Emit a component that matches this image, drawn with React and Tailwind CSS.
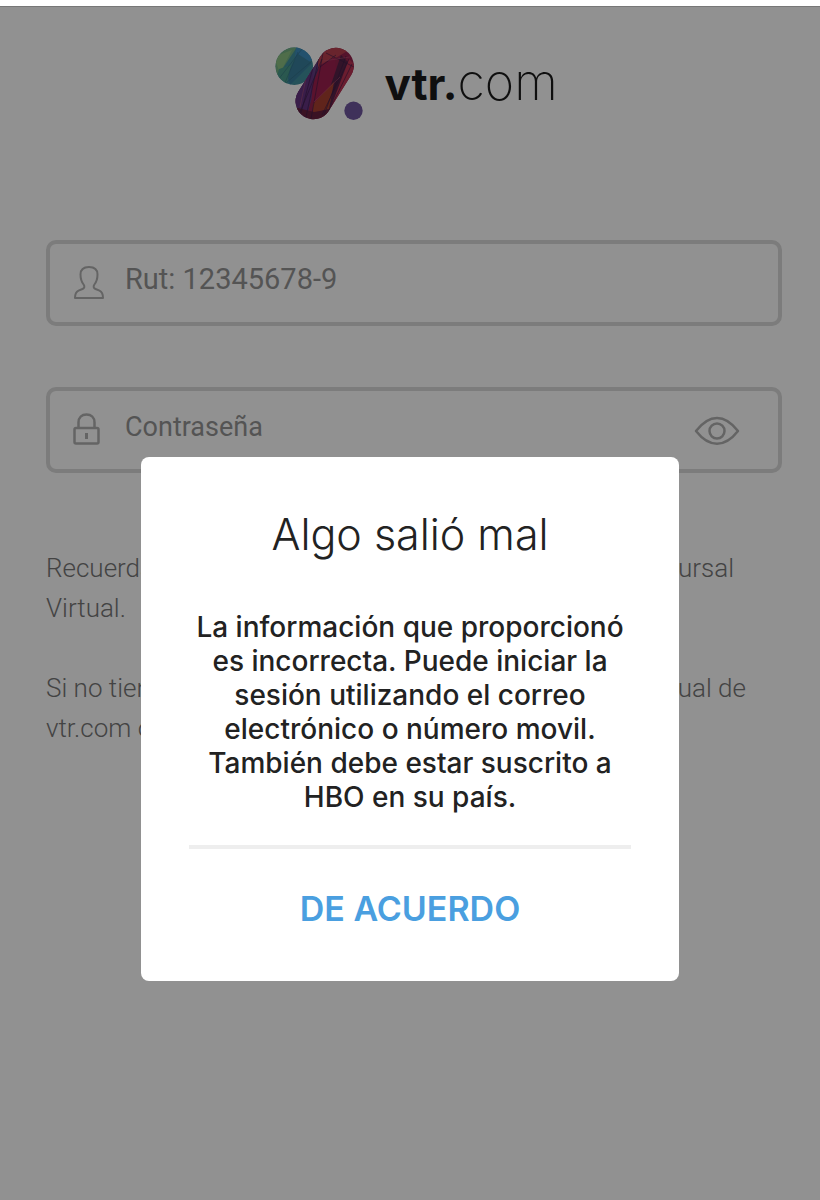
import React, { useState } from 'react';

const UserIcon = () => (
    <svg width="32" height="36" viewBox="0 0 32 36" fill="none" stroke="currentColor" strokeWidth="2" strokeLinejoin="round" aria-hidden="true">
        <path d="M16 2 C10.5 2 7.5 5 7.5 9.5 C7.5 14 8.6 17 10.6 19.5 C12 21.6 11.4 23.2 9.5 24 L5.5 25.6 C3 26.8 2 29.3 2 33 H30 C30 29.3 29 26.8 26.5 25.6 L22.5 24 C20.6 23.2 20 21.6 21.4 19.5 C23.4 17 24.5 14 24.5 9.5 C24.5 5 21.5 2 16 2 Z" />
    </svg>
);

const LockIcon = () => (
    <svg width="28" height="34" viewBox="0 0 28 34" fill="none" stroke="currentColor" strokeWidth="2.5" aria-hidden="true">
        <rect x="1.5" y="15" width="24" height="15.5" rx="1.5" />
        <path d="M5.5 15 V9.5 C5.5 4.5 8.8 1.5 13.5 1.5 C18.2 1.5 21.5 4.5 21.5 9.5 V15" />
        <path d="M13.5 20 V26" strokeWidth="3" />
    </svg>
);

const EyeIcon = () => (
    <svg width="46" height="30" viewBox="0 0 46 30" fill="none" stroke="currentColor" strokeWidth="2.5" strokeLinejoin="round" aria-hidden="true">
        <path d="M2 16 C9 7 15 3 23 3 C31 3 37 7 44 16 C37 25 31 28.7 23 28.7 C15 28.7 9 25 2 16 Z" />
        <circle cx="23" cy="16" r="7.5" />
    </svg>
);

const LogoMark = () => (
    <svg width="90" height="76" viewBox="0 0 90 76" aria-hidden="true">
        <defs>
            <clipPath id="ball">
                <circle cx="20.3" cy="19.3" r="18.7" />
            </clipPath>
            <clipPath id="pill">
                <rect x="-18" y="-39" width="36" height="78" rx="18" transform="translate(50.7 36.5) rotate(32)" />
            </clipPath>
        </defs>
        <g clipPath="url(#ball)">
            <rect width="40" height="40" fill="#42909e" />
            <path d="M0 0 H23 L3 30 L0 26 Z" fill="#74b083" />
            <path d="M0 10 L18 3 L6 26 Z" fill="#8cc083" />
            <path d="M22 0 H40 V13 L20 20 Z" fill="#3f8fc0" />
            <path d="M24 7 L38 16 L16 38 L13 28 Z" fill="#397f9d" />
            <path d="M5 22 L17 18 L12 40 H0 Z" fill="#4a9c8b" />
            <g stroke="#316b7e" strokeWidth="0.5" fill="none">
                <path d="M4 33 L28 2" />
                <path d="M10 38 L24 5" />
                <path d="M12 36 L38 14" />
            </g>
        </g>
        <g clipPath="url(#pill)">
            <rect x="12" width="76" height="76" fill="#96244e" />
            <path d="M38 0 H54 L30 76 H12 V40 Z" fill="#634083" />
            <path d="M44 0 H80 L60 12 L44 22 Z" fill="#b94050" />
            <path d="M46 18 L61 10 L63 34 L40 62 L36 44 Z" fill="#9f2050" />
            <path d="M67 8 L77 18 L54 66 L46 70 Z" fill="#582348" />
            <path d="M75 12 L84 21 L60 66 L55 65 Z" fill="#bb3353" />
            <path d="M39 57 L60 35 L55 62 L39 66 Z" fill="#a94030" />
            <path d="M19 52 L40 14 L38 48 L32 74 Z" fill="#643480" />
            <path d="M20 60 L40 65 L57 62 L50 76 H22 Z" fill="#66203e" />
            <g stroke="#3b1c48" strokeWidth="0.6" fill="none">
                <path d="M42 9 L27 66" />
                <path d="M45 10 L32 70" />
                <path d="M49 6 L37 72" />
                <path d="M48 12 L24 70" />
                <path d="M72 9 L50 68" />
                <path d="M75 12 L48 68" />
                <path d="M78 17 L53 68" />
                <path d="M62 8 L46 20" />
                <path d="M52 6 L80 20" />
            </g>
            <g stroke="#bd5676" strokeWidth="0.5" fill="none">
                <path d="M33 26 L26 60" />
                <path d="M40 55 L66 30" />
                <path d="M49 14 L76 10" />
            </g>
        </g>
        <circle cx="79.5" cy="63.8" r="9.2" fill="#70569f" />
    </svg>
);

const Logo = () => (
    <div className="flex justify-center gap-5 pl-1">
        <LogoMark />
        <div className="flex items-baseline font-['Inter',sans-serif] text-[50px] leading-[70px] text-[#1c1c1c]">
            <span className="text-[44px] font-bold">vtr.</span>
            <span className="font-extralight">com</span>
        </div>
    </div>
);

const LoginForm = () => {
    const [rut, setRut] = useState('');
    const [password, setPassword] = useState('');
    const [showPassword, setShowPassword] = useState(false);

    return (
        <form className="mt-[117px] space-y-[61px]">
            <div className="flex h-[86px] items-center rounded-[10px] border-4 border-[#dadada] pl-[23px] pr-[38px] text-[#b0b0b0]">
                <label htmlFor="rut" className="w-[52px] shrink-0"><UserIcon /></label>
                <input
                    id="rut"
                    type="text"
                    aria-label="Rut"
                    value={rut}
                    onChange={(e) => setRut(e.target.value)}
                    placeholder="Rut: 12345678-9"
                    className="min-w-0 flex-1 bg-transparent pb-1.5 text-[29px] text-[#777] outline-none placeholder:text-[#959595]"
                />
            </div>
            <div className="flex h-[86px] items-center rounded-[10px] border-4 border-[#dadada] pl-[23px] pr-[38px] text-[#b0b0b0]">
                <label htmlFor="password" className="w-[52px] shrink-0"><LockIcon /></label>
                <input
                    id="password"
                    type={showPassword ? 'text' : 'password'}
                    aria-label="Contraseña"
                    value={password}
                    onChange={(e) => setPassword(e.target.value)}
                    placeholder="Contraseña"
                    className="min-w-0 flex-1 bg-transparent pb-1.5 text-[27px] text-[#777] outline-none placeholder:text-[#959595]"
                />
                <button type="button" aria-label="Mostrar contraseña" onClick={() => setShowPassword(!showPassword)}>
                    <EyeIcon />
                </button>
            </div>
        </form>
    );
};

const ErrorDialog = ({ onClose }) => (
    <div className="absolute inset-0 bg-black/43 px-[141px] pt-[450px]">
        <div
            role="alertdialog"
            aria-labelledby="error-title"
            aria-describedby="error-text"
            className="rounded-lg bg-white px-12 pt-[53px] pb-12 text-center font-['Inter',sans-serif] text-[#222]"
        >
            <h2 id="error-title" className="text-[43px] leading-[48px] font-light">Algo salió mal</h2>
            <p id="error-text" className="mt-[52px] text-[28px] leading-[34px] font-medium">
                La información que proporcionó<br />
                es incorrecta. Puede iniciar la<br />
                sesión utilizando el correo<br />
                electrónico o número movil.<br />
                También debe estar suscrito a<br />
                HBO en su país.
            </p>
            <hr className="mt-[31px] border-t-4 border-[#eee]" />
            <button type="button" onClick={onClose} className="mt-9 text-[34px] leading-[48px] font-semibold text-[#4a9fe0]">
                DE ACUERDO
            </button>
        </div>
    </div>
);

const App = () => {
    const [hasError, setHasError] = useState(true);

    return (
        <div className="flex min-h-screen flex-col bg-white pt-[6px] font-['Roboto',sans-serif]">
            <div className="relative flex-1 border-t border-[#777] pr-[38px] pl-[46px] pt-10 pb-10">
                <Logo />
                <LoginForm />
                <div className="mt-[75px] space-y-10 pr-9 text-[26px] leading-10 font-light text-[#777]">
                    <div>
                        <p className="flex justify-between pr-3">
                            <span>Recuerda</span>
                            <span>Sucursal</span>
                        </p>
                        <p>Virtual.</p>
                    </div>
                    <div>
                        <p className="flex justify-between">
                            <span>Si no tienes</span>
                            <span>Virtual de</span>
                        </p>
                        <p>vtr.com o</p>
                    </div>
                </div>
                {hasError && <ErrorDialog onClose={() => setHasError(false)} />}
            </div>
        </div>
    );
};

export default App;
